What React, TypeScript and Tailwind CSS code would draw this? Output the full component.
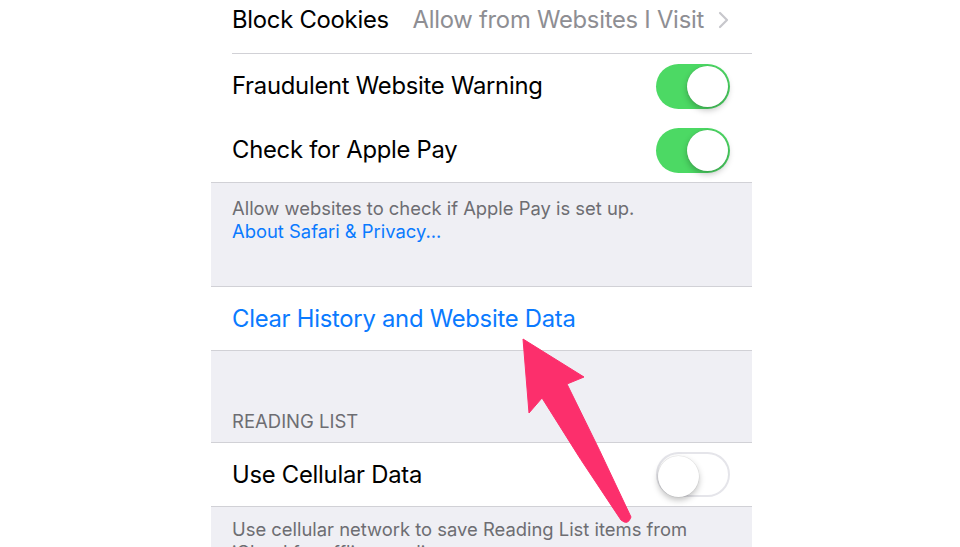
import React from "react";

const font = { fontFamily: "Inter, 'Noto Sans', sans-serif" };

function Toggle({ on }: { on: boolean }) {
  return (
    <div
      className={
        "relative h-[45px] w-[74px] rounded-full " +
        (on ? "bg-[#4cd964]" : "bg-white border-[2px] border-[#e5e5ea]")
      }
    >
      <div
        className={
          "absolute top-[2px] h-[41px] w-[41px] rounded-full bg-white shadow-[0_3px_6px_rgba(0,0,0,0.25),0_0_0_0.5px_rgba(0,0,0,0.08)] " +
          (on ? "right-[2px]" : "left-[0px] top-[0px]")
        }
      />
    </div>
  );
}

function Chevron() {
  return (
    <svg width="12" height="18" viewBox="0 0 12 18" className="ml-[14px]">
      <polyline points="2,2 9,9 2,16" fill="none" stroke="#c7c7cc" strokeWidth="2.2" strokeLinecap="round" strokeLinejoin="round" />
    </svg>
  );
}

function Arrow() {
  return (
    <svg
      className="pointer-events-none absolute left-0 top-0"
      width="960"
      height="547"
      viewBox="0 0 960 547"
    >
      <path
        d="M523 339 L584 377 L567 384 Q600 450 631 517 Q628 526 621 520 Q580 460 542 398 L529 413 Z"
        fill="#fc2f6c"
        stroke="#fc2f6c"
        strokeWidth="1"
        strokeLinejoin="round"
      />
    </svg>
  );
}

export default function App() {
  return (
    <div className="relative h-[547px] w-[960px] overflow-hidden bg-white" style={font}>
      <div className="ml-[211px] flex w-[541px] flex-col">
        {/* Block Cookies */}
        <div className="flex h-[53px] items-center pb-[13px] pl-[21px] pr-[22px] text-[23.8px] tracking-[-0.25px]">
          <span className="text-black">Block Cookies</span>
          <span className="ml-auto text-[#8e8e93]">Allow from Websites I Visit</span>
          <Chevron />
        </div>
        <div className="ml-[21px] h-px bg-[#d1d1d6]" />
        {/* Fraudulent Website Warning */}
        <div className="flex h-[64px] items-center justify-between pl-[21px] pr-[22px]">
          <span className="text-[23.8px] tracking-[-0.25px] text-black">Fraudulent Website Warning</span>
          <Toggle on />
        </div>
        <div className="flex h-[64px] items-center justify-between pl-[21px] pr-[22px]">
          <span className="text-[23.8px] tracking-[-0.25px] text-black">Check for Apple Pay</span>
          <Toggle on />
        </div>
        <div className="h-px bg-[#d1d1d6]" />
        {/* Apple Pay footer */}
        <div className="h-[103px] bg-[#efeff4] pl-[21px] pt-[14px] text-[18.4px] leading-[23px]">
          <div className="text-[#6d6d72]">Allow websites to check if Apple Pay is set up.</div>
          <div className="text-[#0a7aff]">About Safari &amp; Privacy...</div>
        </div>
        <div className="h-px bg-[#d1d1d6]" />
        <div className="flex h-[63px] items-center pl-[21px]">
          <span className="text-[23.8px] tracking-[-0.25px] text-[#0a7aff]">Clear History and Website Data</span>
        </div>
        <div className="h-px bg-[#d1d1d6]" />
        {/* Reading list header */}
        <div className="flex h-[91px] items-end bg-[#efeff4] pb-[11px] pl-[21px]">
          <span className="text-[18.5px] leading-[20px] text-[#6d6d72]">READING LIST</span>
        </div>
        <div className="h-px bg-[#d1d1d6]" />
        <div className="flex h-[63px] items-center justify-between pl-[21px] pr-[22px]">
          <span className="text-[23.8px] tracking-[-0.25px] text-black">Use Cellular Data</span>
          <Toggle on={false} />
        </div>
        <div className="h-px bg-[#d1d1d6]" />
        <div className="h-[60px] bg-[#efeff4] pl-[21px] pt-[11px] text-[18.4px] leading-[23px] text-[#6d6d72]">
          <div>Use cellular network to save Reading List items from</div>
          <div>iCloud for offline reading.</div>
        </div>
      </div>
      <Arrow />
    </div>
  );
}
